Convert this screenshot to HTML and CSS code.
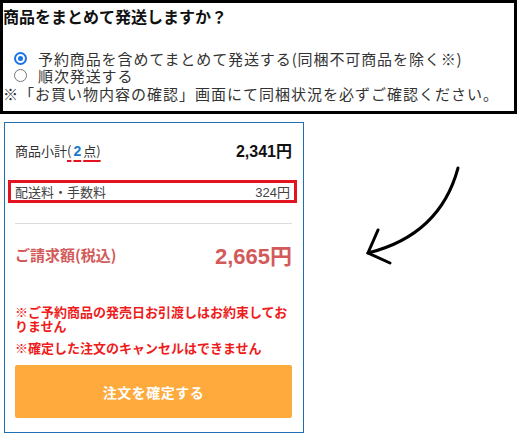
FILE: index.html
```html
<!DOCTYPE html>
<html lang="ja">
<head>
<meta charset="utf-8">
<link rel="stylesheet" href="styles.css">
</head>
<body>
<div class="page">
  <section class="ship-box">
    <h2 class="ship-title">商品をまとめて発送しますか？</h2>
    <div class="opt"><span class="radio checked"></span><span>予約商品を含めてまとめて発送する(同梱不可商品を除く※)</span></div>
    <div class="opt"><span class="radio"></span><span>順次発送する</span></div>
    <div class="note">※「お買い物内容の確認」画面にて同梱状況を必ずご確認ください。</div>
  </section>

  <section class="panel">
    <div class="row subtotal">
      <span class="label">商品小計<span class="count">(<b class="num">2</b>点)</span></span>
      <span class="amount">2,341円</span>
    </div>
    <div class="row fee">
      <span>配送料・手数料</span>
      <span>324円</span>
    </div>
    <hr class="sep">
    <div class="row total">
      <span class="total-label">ご請求額(税込)</span>
      <span class="total-amount">2,665円</span>
    </div>
    <p class="warn first">※ご予約商品の発売日お引渡しはお約束しておりません</p>
    <p class="warn second">※確定した注文のキャンセルはできません</p>
    <button class="confirm">注文を確定する</button>
  </section>

  <svg class="arrow" width="524" height="437" viewBox="0 0 524 437">
    <path d="M458 168 Q440 235 368 253" fill="none" stroke="#000" stroke-width="3" stroke-linecap="round"/>
    <path d="M378 230 L368 253 L390 263" fill="none" stroke="#000" stroke-width="3" stroke-linecap="round" stroke-linejoin="miter"/>
  </svg>
</div>
</body>
</html>
```

FILE: styles.css
```css
* { box-sizing: border-box; }
html, body { margin: 0; padding: 0; background: #fff; }
body {
  font-family: "Noto Sans CJK JP", "Noto Sans", sans-serif;
  color: #222;
  width: 524px;
  height: 437px;
  overflow: hidden;
}
.page { position: relative; width: 524px; height: 437px; }

.ship-box {
  width: 517px;
  border: 3px solid #000;
  padding: 0 0 8px 0;
  color: #333;
}
.ship-title {
  margin: 0 0 21px 0;
  font-size: 16px;
  line-height: 26px;
  font-weight: bold;
  color: #111;
}
.opt {
  display: flex;
  align-items: center;
  font-size: 15px;
  letter-spacing: 0.9px;
  line-height: 17px;
  height: 17px;
  padding-left: 11px;
}
.radio {
  width: 13px;
  height: 13px;
  border-radius: 50%;
  border: 1.5px solid #767676;
  margin-right: 11px;
  flex: none;
  position: relative;
  background: #fff;
}
.radio.checked { border: 2px solid #1a73e8; }
.radio.checked::after {
  content: "";
  position: absolute;
  left: 2px; top: 2px;
  width: 5px; height: 5px;
  border-radius: 50%;
  background: #1a73e8;
}
.note {
  font-size: 15px;
  letter-spacing: 1px;
  line-height: 19px;
}

.panel {
  width: 300px;
  margin: 8px 0 0 4px;
  border: 1px solid #1f6fb2;
  padding: 17px 11px 14px 10px;
}
.row {
  display: flex;
  justify-content: space-between;
  align-items: center;
}
.subtotal {
  height: 20px;
  font-size: 13px;
  color: #333;
}
.count {
  text-decoration: underline;
  text-decoration-color: #e3141f;
  text-decoration-thickness: 2px;
  text-underline-offset: 4px;
}
.num {
  color: #1b7ac8;
  font-family: "Liberation Sans", sans-serif;
  font-size: 14px;
  padding: 0 2px;
}
.amount {
  font-family: "Liberation Sans", "Noto Sans CJK JP", sans-serif;
  font-weight: bold;
  font-size: 16px;
  color: #111;
}
.fee {
  margin: 20px -5px 0 -7px;
  height: 23px;
  border: 3px solid #e3141f;
  padding: 0 4px;
  font-size: 13px;
  color: #444;
}
.fee span:last-child { font-family: "Liberation Sans", "Noto Sans CJK JP", sans-serif; font-size: 13px; }
.sep {
  margin: 20px 0 0 0;
  border: 0;
  border-top: 1px solid #dcdcdc;
  height: 0;
}
.total {
  margin-top: 15px;
  height: 30px;
  color: #d35a5a;
}
.total-label { font-size: 15px; font-weight: 600; }
.total-amount {
  font-family: "Liberation Sans", "Noto Sans CJK JP", sans-serif;
  font-weight: bold;
  font-size: 22px;
}
.warn {
  margin: 0;
  color: #ee1c1c;
  font-weight: bold;
  font-size: 13px;
  line-height: 14px;
}
.warn.first { margin-top: 36px; }
.warn.second { margin-top: 8px; }
.confirm {
  display: block;
  width: 100%;
  height: 53px;
  margin-top: 10px;
  border: 0;
  border-radius: 2px;
  background: #ffaa3d;
  color: #fff;
  font-family: "Noto Sans CJK JP", sans-serif;
  font-weight: bold;
  font-size: 14px;
  letter-spacing: 0.5px;
}
.arrow { position: absolute; left: 0; top: 0; pointer-events: none; }
```
